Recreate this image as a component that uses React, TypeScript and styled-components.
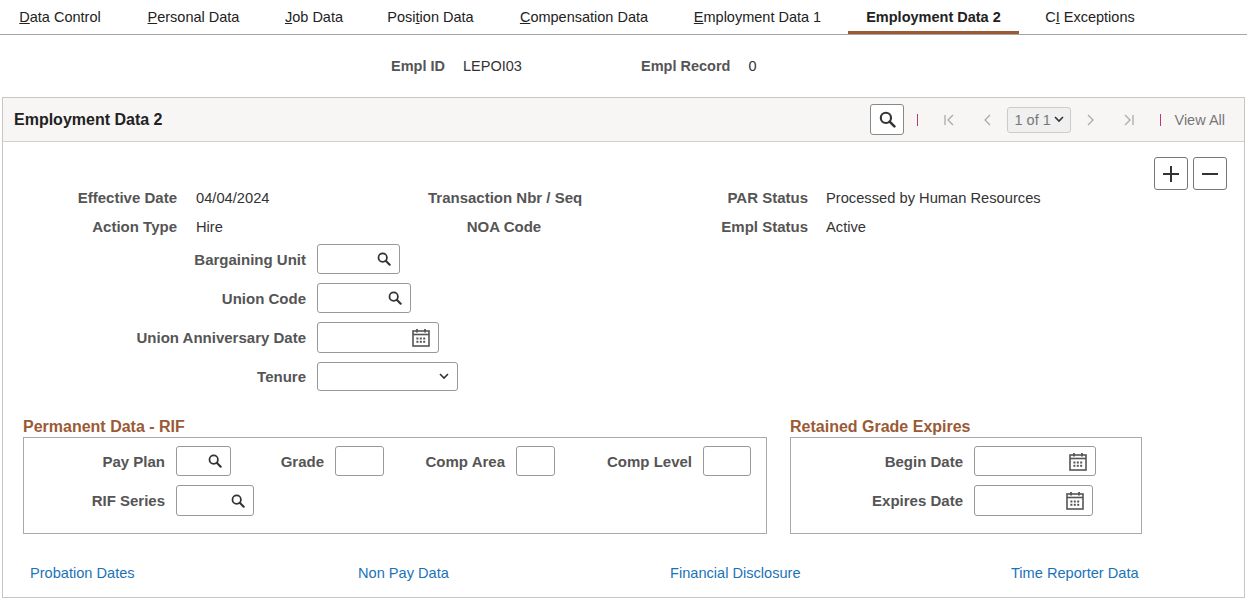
import React from "react";
import styled, { createGlobalStyle } from "styled-components";

const Global = createGlobalStyle`
  body { margin: 0; font-family: "Liberation Sans", Arial, sans-serif; font-size: 14px; color: #333; background: #fff; }
`;

const Tabs = styled.div`
  display: flex; height: 35px; border-bottom: 1px solid #a6a6a6; box-sizing: border-box;
`;
const Tab = styled.div<{ $w: number; $active?: boolean }>`
  width: ${p => p.$w}px; flex: none; height: 34px; box-sizing: border-box; display: flex; align-items: center; justify-content: center;
  font-size: 14.5px; color: #222; font-weight: ${p => (p.$active ? 700 : 400)};
  border-bottom: 3px solid ${p => (p.$active ? "#9b5a36" : "transparent")};
  padding-top: 2px;
  u { text-decoration: underline; }
`;
const Spacer = styled.div<{ $w: number }>` width: ${p => p.$w}px; flex: none; `;

const KeyRow = styled.div`
  display: flex; align-items: center; height: 62px; padding-left: 391px; font-size: 14.5px;
`;
const KeyLabel = styled.span` font-weight: 700; color: #555; margin-right: 18px; `;
const KeyValue = styled.span<{ $w: number }>` width: ${p => p.$w}px; color: #333; `;

const Panel = styled.div`
  margin: 0 2px; border: 1px solid #c6c6c6; height: 501px; box-sizing: border-box;
`;
const PanelHead = styled.div`
  height: 43px; background: #f7f6f5; border-bottom: 1px solid #d0d0d0; display: flex; align-items: center;
  padding: 0 19px 0 11px;
`;
const PanelTitle = styled.div` font-weight: 700; font-size: 16px; color: #222; flex: 1; `;
const IconBtn = styled.div`
  width: 34px; height: 31px; border: 1px solid #888; border-radius: 3px; box-sizing: border-box; background: #fff;
  display: flex; align-items: center; justify-content: center;
`;
const Sep = styled.div` width: 1px; height: 12px; background: #b23c7c; margin: 0 13px; `;
const Nav = styled.span` display: flex; align-items: center; margin: 0 12px; `;
const PageSel = styled.div`
  width: 64px; height: 26px; border: 1px solid #ccc; border-radius: 3px; background: #f0f0f0; box-sizing: border-box;
  display: flex; align-items: center; justify-content: space-between; padding: 0 6px; color: #777; font-size: 14.5px;
`;
const ViewAll = styled.span` color: #777; font-size: 14.5px; `;

const Body = styled.div``;
const TopBtns = styled.div` display: flex; justify-content: flex-end; gap: 5px; padding: 15px 17px 0 0; height: 33px; `;
const SqBtn = styled.div`
  width: 34px; height: 33px; border: 1px solid #777; border-radius: 3px; box-sizing: border-box;
  display: flex; align-items: center; justify-content: center;
`;

const InfoGrid = styled.div`
  display: grid; grid-template-columns: 174px 251px 152px 78px 150px 1fr;
  row-gap: 11px; margin-top: -1px; line-height: 18px;
`;
const L = styled.div<{ $center?: boolean }>`
  font-weight: 700; color: #555; font-size: 15px; white-space: nowrap; text-align: ${p => (p.$center ? "center" : "right")};
`;
const V = styled.div<{ $pad?: number }>` padding-left: ${p => p.$pad ?? 19}px; color: #333; font-size: 14.7px; white-space: nowrap; `;

const FieldCol = styled.div` display: flex; flex-direction: column; gap: 9px; margin-top: 8px; `;
const Field = styled.div<{ $lw: number }>`
  display: flex; align-items: center; gap: 11px;
  & > label { width: ${p => p.$lw}px; text-align: right; font-weight: 700; color: #555; flex: none; font-size: 15px; white-space: nowrap; }
`;
const Input = styled.div<{ $w: number; $h?: number }>`
  width: ${p => p.$w}px; height: ${p => p.$h ?? 30}px; border: 1px solid #999; border-radius: 3px; box-sizing: border-box;
  display: flex; align-items: center; justify-content: flex-end; padding-right: 8px; background: #fff; flex: none;
`;

const Sections = styled.div` display: flex; margin-top: 27px; padding-left: 20px; gap: 23px; `;
const Section = styled.div<{ $w: number }>` width: ${p => p.$w}px; `;
const SecTitle = styled.div` color: #9b5a36; font-weight: 700; font-size: 16px; line-height: 18px; margin-bottom: 1px; `;
const SecBox = styled.div`
  border: 1px solid #aaa; height: 97px; box-sizing: border-box; padding-top: 8px;
  display: flex; flex-direction: column; gap: 9px;
`;
const FieldRow = styled.div` display: flex; align-items: center; `;

const Links = styled.div` display: flex; padding: 31px 0 0 27px; `;
const Link = styled.a<{ $w: number }>` width: ${p => p.$w}px; color: #1a73b8; text-decoration: none; font-size: 14.6px; `;

const Search = ({ s = 14 }: { s?: number }) => (
  <svg width={s} height={s} viewBox="0 0 16 16"><circle cx="6.5" cy="6.5" r="4.8" fill="none" stroke="#333" strokeWidth="2" /><line x1="10" y1="10" x2="14.5" y2="14.5" stroke="#333" strokeWidth="2.4" strokeLinecap="round" /></svg>
);
const Cal = () => (
  <svg width="18" height="19" viewBox="0 0 18 19"><rect x="1" y="3" width="16" height="15" fill="none" stroke="#555" strokeWidth="1.6" /><line x1="1" y1="6.5" x2="17" y2="6.5" stroke="#555" strokeWidth="1.6" /><line x1="5" y1="1" x2="5" y2="4.5" stroke="#555" strokeWidth="1.8" /><line x1="13" y1="1" x2="13" y2="4.5" stroke="#555" strokeWidth="1.8" />{[4.4, 7.8, 11.2].map(x => [9.5, 12.8].map(y => <rect key={x + "-" + y} x={x} y={y} width="2" height="2" fill="#555" />))}</svg>
);
const Chev = () => (
  <svg width="10" height="7" viewBox="0 0 10 7"><path d="M1 1l4 4 4-4" fill="none" stroke="#333" strokeWidth="1.6" /></svg>
);
const Arrow = ({ dir, bar }: { dir: "l" | "r"; bar?: boolean }) => (
  <svg width="14" height="14" viewBox="0 0 14 14">
    {dir === "l" ? <path d={bar ? "M10 2L5 7l5 5" : "M9 2L4 7l5 5"} fill="none" stroke="#aaa" strokeWidth="1.3" /> : <path d={bar ? "M4 2l5 5-5 5" : "M5 2l5 5-5 5"} fill="none" stroke="#aaa" strokeWidth="1.3" />}
    {bar && (dir === "l" ? <line x1="2" y1="2" x2="2" y2="12" stroke="#aaa" strokeWidth="1.3" /> : <line x1="12" y1="2" x2="12" y2="12" stroke="#aaa" strokeWidth="1.3" />)}
  </svg>
);

export default function App() {
  return (
    <>
      <Global />
      <Tabs>
        <Spacer $w={1} />
        <Tab $w={118}><span><u>D</u>ata Control</span></Tab>
        <Tab $w={149}><span><u>P</u>ersonal Data</span></Tab>
        <Tab $w={92}><span><u>J</u>ob Data</span></Tab>
        <Tab $w={141}><span>Posi<u>t</u>ion Data</span></Tab>
        <Tab $w={166}><span><u>C</u>ompensation Data</span></Tab>
        <Tab $w={181}><span><u>E</u>mployment Data 1</span></Tab>
        <Tab $w={171} $active>Employment Data 2</Tab>
        <Tab $w={142}><span>C<u>I</u> Exceptions</span></Tab>
      </Tabs>
      <KeyRow>
        <KeyLabel>Empl ID</KeyLabel><KeyValue $w={178}>LEPOI03</KeyValue>
        <KeyLabel>Empl Record</KeyLabel><KeyValue $w={20}>0</KeyValue>
      </KeyRow>
      <Panel>
        <PanelHead>
          <PanelTitle>Employment Data 2</PanelTitle>
          <IconBtn><Search s={17} /></IconBtn>
          <Sep />
          <Nav><Arrow dir="l" bar /></Nav><Nav><Arrow dir="l" /></Nav>
          <PageSel>1 of 1 <Chev /></PageSel>
          <Nav><Arrow dir="r" /></Nav><Nav><Arrow dir="r" bar /></Nav>
          <Sep />
          <ViewAll>View All</ViewAll>
        </PanelHead>
        <Body>
          <TopBtns>
            <SqBtn><svg width="18" height="18"><path d="M9 1v16M1 9h16" stroke="#333" strokeWidth="2" /></svg></SqBtn>
            <SqBtn><svg width="18" height="18"><path d="M1 9h16" stroke="#333" strokeWidth="2" /></svg></SqBtn>
          </TopBtns>
          <InfoGrid>
            <L>Effective Date</L><V>04/04/2024</V><L>Transaction Nbr / Seq</L><div /><L>PAR Status</L><V $pad={18}>Processed by Human Resources</V>
            <L>Action Type</L><V>Hire</V><L $center>NOA Code</L><div /><L>Empl Status</L><V $pad={18}>Active</V>
          </InfoGrid>
          <FieldCol>
            <Field $lw={303}><label>Bargaining Unit</label><Input $w={83}><Search /></Input></Field>
            <Field $lw={303}><label>Union Code</label><Input $w={94}><Search /></Input></Field>
            <Field $lw={303}><label>Union Anniversary Date</label><Input $w={122} $h={31}><Cal /></Input></Field>
            <Field $lw={303}><label>Tenure</label><Input $w={141} $h={29}><Chev /></Input></Field>
          </FieldCol>
          <Sections>
            <Section $w={744}>
              <SecTitle>Permanent Data - RIF</SecTitle>
              <SecBox>
                <FieldRow>
                  <Field $lw={141}><label>Pay Plan</label><Input $w={55}><Search /></Input></Field>
                  <Field $lw={93}><label>Grade</label><Input $w={49} /></Field>
                  <Field $lw={121}><label>Comp Area</label><Input $w={39} /></Field>
                  <Field $lw={137}><label>Comp Level</label><Input $w={48} /></Field>
                </FieldRow>
                <FieldRow>
                  <Field $lw={141}><label>RIF Series</label><Input $w={78} $h={31}><Search /></Input></Field>
                </FieldRow>
              </SecBox>
            </Section>
            <Section $w={352}>
              <SecTitle>Retained Grade Expires</SecTitle>
              <SecBox>
                <Field $lw={172}><label>Begin Date</label><Input $w={122}><Cal /></Input></Field>
                <Field $lw={172}><label>Expires Date</label><Input $w={119} $h={31}><Cal /></Input></Field>
              </SecBox>
            </Section>
          </Sections>
          <Links>
            <Link $w={328}>Probation Dates</Link>
            <Link $w={312}>Non Pay Data</Link>
            <Link $w={341}>Financial Disclosure</Link>
            <Link $w={140}>Time Reporter Data</Link>
          </Links>
        </Body>
      </Panel>
    </>
  );
}
